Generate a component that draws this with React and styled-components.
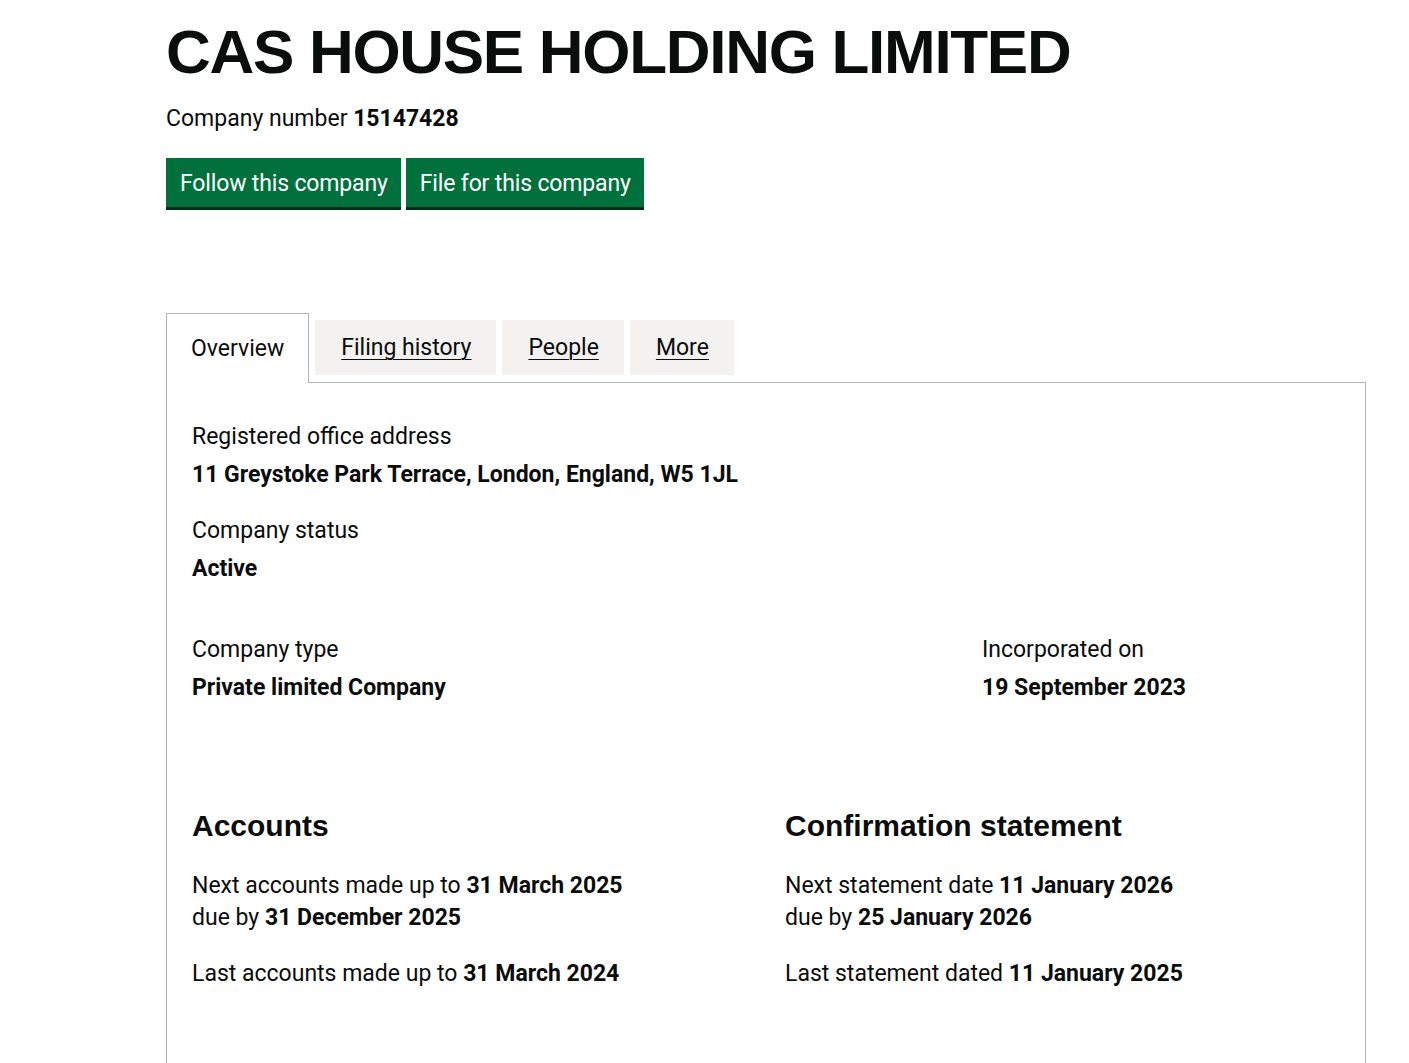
import React from "react";
import styled, { createGlobalStyle } from "styled-components";

const GlobalStyle = createGlobalStyle`
  html, body { margin: 0; padding: 0; background: #ffffff; }
  body {
    font-family: Roboto, "Liberation Sans", Arial, sans-serif;
    color: #0b0c0c;
    -webkit-font-smoothing: antialiased;
  }
`;

const Page = styled.main`
  padding: 16px 43px 0 166px;
`;

const Title = styled.h1`
  margin: 0;
  font-family: "Liberation Sans", Arial, sans-serif;
  font-weight: 700;
  font-size: 62px;
  letter-spacing: -1.3px;
  line-height: 72px;
  color: #0b0c0c;
`;

const Text = styled.p`
  margin: 0;
  font-size: 23px;
  line-height: 32px;
  color: #0b0c0c;
`;

const CompanyNumber = styled(Text)`
  margin-top: 15px;
`;

const Strong = styled.strong`
  font-weight: 700;
`;

const ButtonRow = styled.div`
  display: flex;
  gap: 5px;
  margin-top: 23px;
`;

const Button = styled.button`
  font-family: Roboto, "Liberation Sans", Arial, sans-serif;
  font-size: 23px;
  line-height: 26px;
  letter-spacing: -0.15px;
  color: #ffffff;
  background: #00703c;
  border: 0;
  border-radius: 0;
  box-shadow: 0 3px 0 #002d18;
  padding: 13px 13px 10px 14px;
  cursor: pointer;
`;

const Tabs = styled.nav`
  margin-top: 106px;
`;

const TabList = styled.ul`
  list-style: none;
  margin: 0;
  padding: 0;
  display: flex;
  align-items: flex-end;
  gap: 6px;
`;

const Tab = styled.li`
  font-size: 23px;
  line-height: 30px;
  height: ${(p) => (p.$selected ? "70px" : "55px")};
  box-sizing: border-box;
  padding: ${(p) => (p.$selected ? "20px 24px 0 24px" : "13px 25px 0 26px")};
  background: ${(p) => (p.$selected ? "#ffffff" : "#f3f2f1")};
  border: ${(p) => (p.$selected ? "1px solid #b1b4b6" : "0")};
  border-bottom: 0;
  margin-bottom: ${(p) => (p.$selected ? "-1px" : "7px")};
  position: relative;
  z-index: 1;
`;

const TabLink = styled.a`
  color: #0b0c0c;
  text-decoration: ${(p) => (p.$selected ? "none" : "underline")};
  text-decoration-thickness: 1px;
  text-underline-offset: 4px;
`;

const Panel = styled.section`
  border: 1px solid #b1b4b6;
  border-bottom: 0;
  padding: 38px 25px 80px 25px;
  min-height: 600px;
`;

const Field = styled.div`
  margin-bottom: ${(p) => p.$gap || "24px"};
`;

const Label = styled(Text)`
  margin-bottom: 6px;
`;

const Value = styled(Text)`
  font-weight: 700;
`;

const TwoCol = styled.div`
  display: grid;
  grid-template-columns: ${(p) => p.$cols};
  column-gap: 38px;
  margin-top: ${(p) => p.$top || "0"};
`;

const SubHeading = styled.h2`
  margin: 0 0 26px 0;
  font-family: "Liberation Sans", Arial, sans-serif;
  font-weight: 700;
  font-size: 30px;
  line-height: 36px;
  color: #0b0c0c;
`;

const Para = styled(Text)`
  margin-bottom: 24px;
`;

export default function App() {
  return (
    <>
      <GlobalStyle />
      <Page>
        <Title>CAS HOUSE HOLDING LIMITED</Title>
        <CompanyNumber>
          Company number <Strong>15147428</Strong>
        </CompanyNumber>
        <ButtonRow>
          <Button>Follow this company</Button>
          <Button>File for this company</Button>
        </ButtonRow>

        <Tabs>
          <TabList>
            <Tab $selected>
              <TabLink $selected>Overview</TabLink>
            </Tab>
            <Tab>
              <TabLink href="#">Filing history</TabLink>
            </Tab>
            <Tab>
              <TabLink href="#">People</TabLink>
            </Tab>
            <Tab>
              <TabLink href="#">More</TabLink>
            </Tab>
          </TabList>
          <Panel>
            <Field>
              <Label>Registered office address</Label>
              <Value>11 Greystoke Park Terrace, London, England, W5 1JL</Value>
            </Field>
            <Field $gap="49px">
              <Label>Company status</Label>
              <Value>Active</Value>
            </Field>
            <TwoCol $cols="752px 1fr">
              <Field $gap="0">
                <Label>Company type</Label>
                <Value>Private limited Company</Value>
              </Field>
              <Field $gap="0">
                <Label>Incorporated on</Label>
                <Value>19 September 2023</Value>
              </Field>
            </TwoCol>
            <TwoCol $cols="1fr 1fr" $top="104px">
              <div>
                <SubHeading>Accounts</SubHeading>
                <Para>
                  Next accounts made up to <Strong>31 March 2025</Strong>
                  <br />
                  due by <Strong>31 December 2025</Strong>
                </Para>
                <Para>
                  Last accounts made up to <Strong>31 March 2024</Strong>
                </Para>
              </div>
              <div>
                <SubHeading>Confirmation statement</SubHeading>
                <Para>
                  Next statement date <Strong>11 January 2026</Strong>
                  <br />
                  due by <Strong>25 January 2026</Strong>
                </Para>
                <Para>
                  Last statement dated <Strong>11 January 2025</Strong>
                </Para>
              </div>
            </TwoCol>
          </Panel>
        </Tabs>
      </Page>
    </>
  );
}
